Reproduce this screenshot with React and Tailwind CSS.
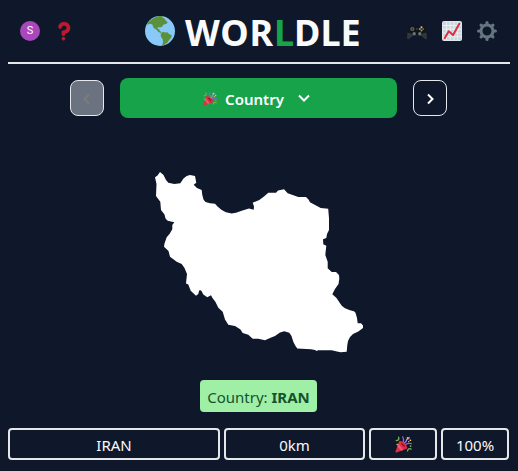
import React from "react";

function Globe() {
  return (
    <svg viewBox="0 0 30 30" className="h-[30px] w-[30px]">
      <circle cx="15" cy="15" r="15" fill="#88c9f9" />
      <path
        fill="#5c913b"
        d="M6 4C9 1.500 12 .2 15.500 0l2.500.4-.5 1.600 1.800.3 1.200 2 2.200 1.900-1.400 1.900-2.600.5-1.900 2.300-2.300.6-1.400-.4-.6 1.600 1.600.4.7 2 1.700 1-.6.8-2.500-.9-2.200-2.600-2.500-1.300L7.300 8.600 5 7.800 3 8.500 1.600 8.200 3.200 6.300zM15.800 17.600l2.200-1.800 2.200.6 2.100-.2 1.900 1.700 2.500 1.400-.4 2.400-1.700 1.900-1.200 1.300-1.200 2-2 1.200-1.700 1.600-1.300-.2.900-3.700-.6-2.800-1.700-2.500zM16 3.500l2 1-1.500.6z"
      />
    </svg>
  );
}

function Question() {
  return (
    <svg viewBox="0 0 36 36" className="h-5 w-5" fill="#be1931" stroke="#be1931" strokeWidth=".6">
      <path d="M17 27c-1.657 0-3-1.343-3-3v-4c0-1.657 1.343-3 3-3 .603-.006 6-1 6-5 0-2-2-4-5-4-2.441 0-4 2-4 3 0 1.657-1.343 3-3 3s-3-1.343-3-3c0-4.878 4.58-9 10-9 8 0 11 5.982 11 11 0 4.145-2.277 7.313-6.413 8.92-.9.351-1.79.587-2.587.747V24c0 1.657-1.343 3-3 3z" />
      <circle cx="17" cy="32" r="3" />
    </svg>
  );
}

function Gamepad() {
  return (
    <svg viewBox="0 0 20 20" className="h-5 w-5">
      <path fill="#31373d" d="M2 7C.7 10.500 0 14 .1 17.300c.1 1.100 1 1.200 1.700.7L6.200 14.500h7.600l4.400 3.500c.7.500 1.600.4 1.700-.7.100-3.300-.6-6.800-1.900-10.300z" />
      <path fill="#141414" d="M1.300 8.500C1.800 6.200 3 5 5 4.700l2 .8h6l2-.8c2 .3 3.200 1.500 3.700 3.800l.6 3-3 .800-3.300 2.200H7l-3.300-2.200-3-.8z" />
      <g fill="#66757f">
        <circle cx="5.400" cy="8" r="2.100" />
        <circle cx="7.200" cy="12.700" r="1.700" />
        <circle cx="12.800" cy="12.700" r="1.700" />
        <circle cx="10" cy="8" r=".7" />
      </g>
      <path stroke="#292f33" strokeWidth=".8" d="M5.400 6.500v3M3.900 8h3" />
      <circle cx="14.500" cy="6.200" r="1" fill="#ffcc4d" />
      <circle cx="12.800" cy="7.900" r="1" fill="#55acee" />
      <circle cx="16.200" cy="7.900" r="1" fill="#dd2e44" />
      <circle cx="14.500" cy="9.600" r="1" fill="#77b255" />
    </svg>
  );
}

function Chart() {
  return (
    <svg viewBox="0 0 20 20" className="h-5 w-5">
      <rect width="20" height="20" rx="2" fill="#e1e8ed" />
      <path fill="#ccd6dd" d="M1 1h18v18H1z" />
      <path stroke="#f5f8fa" strokeWidth=".7" d="M1 4.500h18M1 8.200h18M1 12h18M1 15.700h18M4.500 1v18M8.200 1v18M12 1v18M15.700 1v18" />
      <path fill="none" stroke="#dd2e44" strokeWidth="2" strokeLinecap="round" strokeLinejoin="round" d="M2.800 17 6.700 10.200l4.400 3.900L17.300 2.800" />
    </svg>
  );
}

function Gear() {
  return (
    <svg viewBox="0 0 20 20" className="h-5 w-5">
      <g stroke="#66757f" strokeWidth="3.200" strokeLinecap="round">
        <path d="M10 1.600v3M10 15.400v3M1.600 10h3M15.400 10h3M4.100 4.100l2 2M13.900 13.900l2 2M15.900 4.100l-2 2M6.100 13.900l-2 2" />
      </g>
      <circle cx="10" cy="10" r="6" fill="#0f172a" stroke="#66757f" strokeWidth="3" />
    </svg>
  );
}

function Party({ className }) {
  return (
    <svg viewBox="0 0 18 18" className={className}>
      <g fill="none" strokeLinecap="round" strokeWidth="1.400">
        <path stroke="#77b255" d="M1.300 4.800C3.200 5 4.600 3.600 3.800 1.200M13.300 15.800c.3-2.300 1.700-3 3.800-2" />
        <path stroke="#9266cc" d="M7.800 7.700C9.300 5.700 9.500 3.400 8.200 1M10.200 9.800c1.600-1.700 3.800-2.500 7-1.700" />
        <path stroke="#aa8dd8" d="M9 8.700c.7-2.700 3.100-1.500 3-3.800s2.500-1 3-3.300" />
      </g>
      <path fill="#dd2e44" d="M4.500 5.300.5 16.400c-.2.800.5 1.300 1.200 1.100l11.200-4.200c.5-3-4.500-8.800-8.400-8z" />
      <path fill="#ea596e" d="M3.600 7.800 2.400 11.200l4.300 4.400 2-.8z" />
      <path fill="#a0041e" d="M6.300 7.200c1.800.4 4 2.700 4.600 4.700-1.800-.4-4.200-2.700-4.600-4.700z" />
      <g fill="#ffcc4d">
        <circle cx="13.300" cy="2" r="1" />
        <circle cx="16.300" cy="4.500" r=".9" />
        <circle cx="14.500" cy="6" r=".7" />
        <circle cx="2.300" cy="9" r=".8" />
      </g>
      <circle cx="16.500" cy="10.800" r=".9" fill="#77b255" />
    </svg>
  );
}

function Chevron({ points, className }) {
  return (
    <svg viewBox="0 0 12 12" className={className} fill="none" stroke="currentColor" strokeWidth="2">
      <polyline points={points} />
    </svg>
  );
}

function CountryShape() {
  return (
    <svg viewBox="150 165 220 195" className="h-[195px] w-[220px]" fill="#fff">
      <path d="M155 177.300 157.500 175.500 160 172 163.500 175 166 180 168.300 182.700 174.300 184 180.300 183.300 183.500 178.500 186.700 176 190 175 195 176 196.300 182.700 193.700 184.700 197 188 201.700 190 202.300 195 203.500 199.500 205.500 202 210 203.200 215 203.700 217.500 206.500 221.700 210 226 212.300 231.700 213.500 236 212.800 241.700 210.700 249 208.500 253.700 209.700 254 206.500 252.700 202.700 259.300 200 264 196.500 268.300 192.700 276 192.700 278 190.500 284 189.300 287.700 193.300 298.300 197 306 197 308.500 199.500 310 202.300 320.700 208 328.200 208.700 329 218.300 329 230 327 234 326.300 238 323 239.300 323.300 244.300 326.300 245.700 325.300 255 327.700 261.700 327.700 268.300 331.700 272 336 272 339 275 339.300 279 338.500 284 335 289 332.300 294.300 336.500 298 339.300 302.300 342 306 345 308.300 350 310.300 354 311.300 355.500 312.700 357 318 357.700 323.300 361 323.300 363 325.500 363 328 358.300 331.500 353 334 350 337 348 341 347.300 345 346.700 351.700 340.700 352.300 337 351.500 331.700 350.300 318 350.300 316.700 351 315 350 311 349.300 297.300 348.500 295.500 346 293.300 341.700 291.500 336 289.300 332.700 284.300 331.300 280 332.500 275 336 270 338 265 340.300 258.300 338.700 252.700 338.700 248.300 334.800 242.700 333 240.500 329.500 235 326 228.300 324.700 225 319.500 222.700 311.700 218.300 307.700 215.500 302 212.500 298 211 295.300 207.300 297.300 203.300 294.500 201.500 291 200 290 199 291 198.300 294 196 295.700 190.700 290.700 188.300 284.500 186 283.500 187 274 184.500 268 181.700 264 176.700 261.700 170 256.700 168.500 251 164 246.700 164.500 243.500 166.700 237.300 169.500 234 172.300 229.300 172.300 225 174.300 222.300 167.700 220.700 165.500 218.500 164.500 214.500 161 210 160.300 201.700 156 196 156.500 184Z" />
    </svg>
  );
}

function Cell({ className, children }) {
  return (
    <div className={`${className} flex h-8 shrink-0 items-center justify-center rounded border-2 border-gray-200 text-[15px]`}>
      {children}
    </div>
  );
}

export default function App() {
  return (
    <div className="h-[471px] w-[518px] overflow-hidden bg-[#0f172a] px-2 font-['Noto_Sans','Open_Sans',sans-serif] text-slate-50">
      <header className="flex h-16 w-[502px] items-center border-b-2 border-gray-200">
        <div className="ml-3 flex w-[125px] items-center gap-[14px]">
          <span className="flex h-5 w-5 items-center justify-center rounded-full bg-[#ab47bc] pt-px font-[Roboto,sans-serif] text-[11px] text-white">S</span>
          <Question />
        </div>
        <Globe />
        <h1 className="ml-[10px] w-[214px] whitespace-nowrap pt-[3px] text-4xl leading-10 font-bold">
          <span className="tracking-[0.8px]">WOR</span>
          <span className="text-[#16a34a]">L</span>DLE
        </h1>
        <div className="ml-2 flex gap-[15px]">
          <Gamepad />
          <Chart />
          <Gear />
        </div>
      </header>

      <div className="mt-[14px] ml-[62px] flex h-10 items-center gap-4">
        <button className="flex h-9 w-[34px] items-center justify-center rounded-lg border border-gray-200 bg-[#6b7280] text-[#7c7c7c]">
          <Chevron points="8,1.500 3.500,6 8,10.500" className="mt-0.5 h-3 w-3" />
        </button>
        <button className="flex h-10 w-[277px] items-center rounded-lg bg-[#16a34a] pl-[83px] text-[15px] font-semibold text-white">
          <Party className="mt-0.5 h-[14px] w-[14px]" />
          <span className="ml-2 w-[59px] whitespace-nowrap pt-0.5">Country</span>
          <Chevron points="1,3.500 6,8.500 11,3.500" className="ml-[14px] h-3 w-3" />
        </button>
        <button className="flex h-9 w-[34px] items-center justify-center rounded-lg border border-gray-200 text-white">
          <Chevron points="4,1.500 8.500,6 4,10.500" className="mt-0.5 h-3 w-3" />
        </button>
      </div>

      <div className="mt-[47px] ml-[142px]">
        <CountryShape />
      </div>

      <div className="mt-5 ml-48 flex h-8 w-[117px] items-center justify-center whitespace-nowrap rounded bg-[#9fefa7] pt-0.5 text-[15px] text-[#14532d]">
        Country:&nbsp;<b>IRAN</b>
      </div>

      <div className="mt-4 flex gap-1">
        <Cell className="w-[212px] pt-0.5">IRAN</Cell>
        <Cell className="w-[141px] pt-0.5">0km</Cell>
        <Cell className="w-[68px]">
          <Party className="h-[17px] w-[17px]" />
        </Cell>
        <Cell className="w-[68px] pt-0.5">100%</Cell>
      </div>
    </div>
  );
}
